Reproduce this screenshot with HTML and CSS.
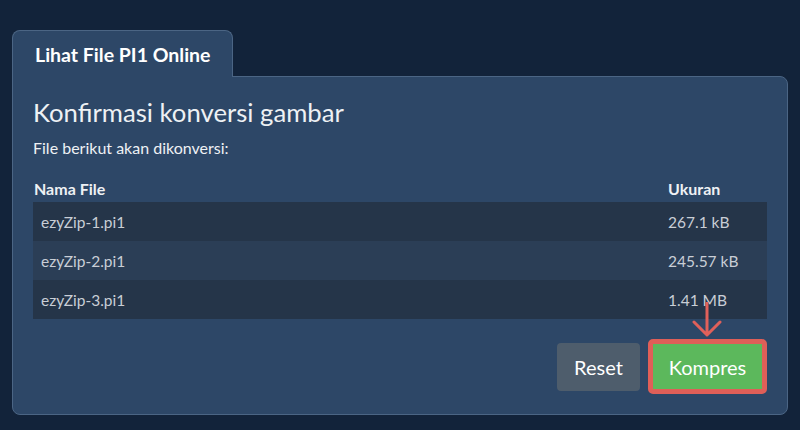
FILE: index.html
```html
<!DOCTYPE html>
<html lang="id">
<head>
<meta charset="utf-8">
<title>Lihat File PI1 Online</title>
<link rel="stylesheet" href="styles.css">
</head>
<body>
<div class="wrap">
  <div class="tab">Lihat File PI1 Online</div>
  <div class="panel">
    <h1 class="title">Konfirmasi konversi gambar</h1>
    <p class="lead">File berikut akan dikonversi:</p>
    <div class="table">
      <div class="thead">
        <div class="th th-name">Nama File</div>
        <div class="th th-size">Ukuran</div>
      </div>
      <div class="row odd"><div class="cell">ezyZip-1.pi1</div><div class="cell size">267.1 kB</div></div>
      <div class="row even"><div class="cell">ezyZip-2.pi1</div><div class="cell size">245.57 kB</div></div>
      <div class="row odd"><div class="cell">ezyZip-3.pi1</div><div class="cell size">1.41 MB</div></div>
    </div>
    <div class="actions">
      <button class="btn btn-reset">Reset</button>
      <div class="kompres-wrap">
        <svg class="arrow" width="30" height="36" viewBox="0 0 30 36" aria-hidden="true">
          <path d="M15 1 V33 M2 20 L15 33 L28 20" fill="none" stroke="#e0605a" stroke-width="3" stroke-linecap="round" stroke-linejoin="round"/>
        </svg>
        <button class="btn btn-kompres">Kompres</button>
      </div>
    </div>
  </div>
</div>
</body>
</html>
```

FILE: styles.css
```css
* { box-sizing: border-box; }
html, body { margin: 0; padding: 0; }
body {
  background: #12233a;
  font-family: Lato, "Open Sans", sans-serif;
  color: #eef1f4;
  width: 800px;
  height: 430px;
  overflow: hidden;
}
.wrap {
  padding: 30px 12px 0 12px;
}
.tab {
  width: 221px;
  height: 47px;
  background: #2d4767;
  border: 1px solid #4b6584;
  border-bottom: none;
  border-radius: 8px 8px 0 0;
  font-weight: 700;
  font-size: 19.5px;
  padding: 12px 0 0 22px;
  color: #ffffff;
  position: relative;
  z-index: 1;
  margin-bottom: -1px;
}
.panel {
  background: #2d4767;
  border: 1px solid #4b6584;
  border-radius: 0 8px 8px 8px;
  height: 339px;
  padding: 20px 20px 0 20px;
}
.title {
  margin: 0;
  font-size: 25.7px;
  font-weight: 400;
  line-height: 30px;
  color: #eef1f4;
}
.lead {
  margin: 11px 0 0 0;
  font-size: 16px;
  line-height: 19px;
  color: #eef1f4;
}
.table {
  margin-top: 22px;
}
.thead {
  display: grid;
  grid-template-columns: 1fr 107px;
  font-weight: 700;
  font-size: 16px;
  line-height: 19px;
  padding-bottom: 4px;
}
.th-name { padding-left: 1px; }
.th-size { padding-left: 8px; }
.row {
  display: grid;
  grid-template-columns: 1fr 107px;
  height: 39px;
  align-items: center;
  font-size: 15.5px;
  color: #c9ced6;
}
.row.odd { background: #253549; }
.row.even { background: #2b3e56; }
.cell { padding-left: 8px; }
.actions {
  display: flex;
  justify-content: flex-end;
  align-items: center;
  gap: 8px;
  margin-top: 20px;
}
.btn {
  font-family: Lato, "Open Sans", sans-serif;
  font-size: 20px;
  font-weight: 400;
  border-radius: 4px;
  color: #ffffff;
  cursor: pointer;
}
.btn-reset {
  width: 83px;
  height: 48px;
  background: #4e5d6c;
  border: none;
}
.kompres-wrap {
  position: relative;
}
.btn-kompres {
  display: block;
  width: 119px;
  height: 55px;
  background: #5cb85c;
  border: 5px solid #df5f58;
  border-radius: 5px;
}
.arrow {
  position: absolute;
  left: 44px;
  top: -37px;
}
```
